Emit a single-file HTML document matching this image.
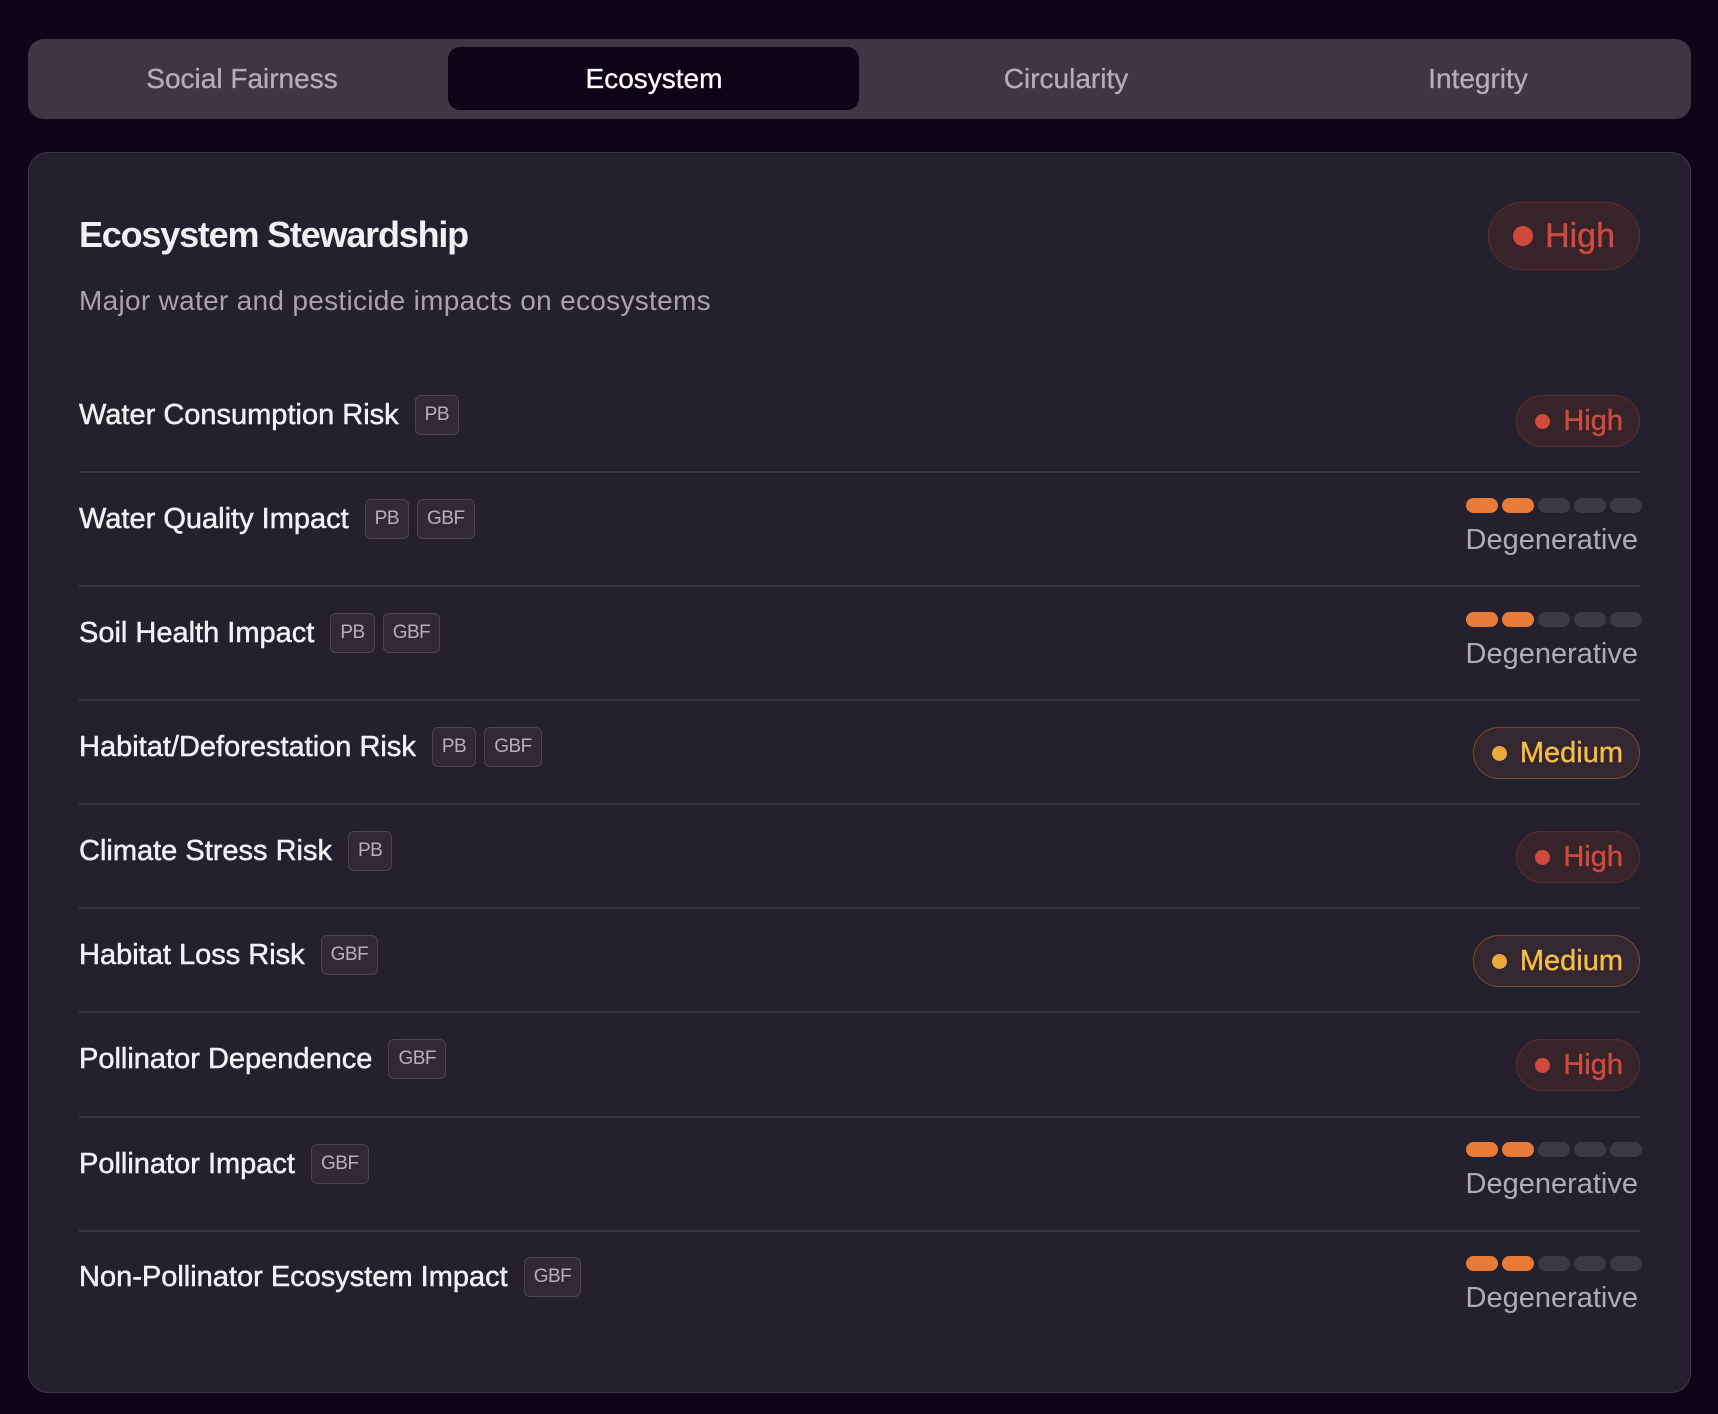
<!DOCTYPE html>
<html><head><meta charset="utf-8"><style>
*{margin:0;padding:0;box-sizing:border-box}
body{width:1718px;height:1414px;background:#0f0519;font-family:"Liberation Sans",sans-serif;position:relative;overflow:hidden}
.abs{position:absolute}
.tabs{left:28px;top:39px;width:1663px;height:80px;background:#3d3743;border-radius:16px}
.tab{top:39px;height:80px;line-height:80px;font-size:28px;color:#b3aeb8;text-align:center;width:400px;-webkit-text-stroke:0.3px currentColor}
.active{left:448px;top:47px;width:411px;height:63px;background:#0e0417;border-radius:12px}
.card{left:28px;top:152px;width:1663px;height:1241px;background:#25202d;border:1.5px solid #3c3744;border-radius:20px}
.title{left:79px;top:214px;font-size:36px;font-weight:bold;color:#f2f0f4;letter-spacing:-1.2px}
.sub{left:79px;top:285px;font-size:28px;color:#a8a3ad;letter-spacing:0.3px}
.sep{left:79px;width:1561px;height:2px;background:#3a3542}
.lab{left:79px;font-size:29px;color:#f3f1f5;line-height:32px;display:flex;align-items:center;white-space:nowrap;-webkit-text-stroke:0.5px #f3f1f5;margin-top:-3px}
.tag{display:inline-block;margin-left:16px;height:40px;line-height:38px;padding:0 9px;font-size:19px;color:#b5b0b9;background:#302a36;border:1.5px solid #4a4450;border-radius:6px;-webkit-text-stroke:0;letter-spacing:-0.5px}
.badge{right:78px;height:52px;border-radius:26px;display:flex;align-items:center;font-size:29px;padding:0 16px 0 18px;-webkit-text-stroke:0.4px currentColor}
.badge i{display:inline-block;width:15px;height:15px;border-radius:50%;margin-right:13px}
.hi{background:#37242b;border:1.5px solid #5e2b2e;color:#cf4a3d}
.hi i{background:#cf4a3d}
.md{background:#352730;border:1.5px solid #7d4a2a;color:#f4bd46}
.md i{background:#eaa83a}
.big{height:68px;border-radius:34px;font-size:34px;padding:0 24px 0 24px}
.big i{width:20px;height:20px;margin-right:12px}
.bar{left:1466px;display:flex;gap:4px}
.bar span{width:32px;height:15px;border-radius:8px;background:#3d3846}
.bar span.on{background:#e87b35}
.deg{right:80px;font-size:29px;color:#b0acb4;letter-spacing:0px}
</style></head><body>
<div class="abs tabs"></div>
<div class="abs active"></div>
<div class="abs tab" style="left:42px">Social Fairness</div>
<div class="abs tab" style="left:454px;color:#fff">Ecosystem</div>
<div class="abs tab" style="left:866px">Circularity</div>
<div class="abs tab" style="left:1278px">Integrity</div>

<div class="abs card"></div>
<div class="abs title">Ecosystem Stewardship</div>
<div class="abs sub">Major water and pesticide impacts on ecosystems</div>
<div class="abs badge hi big" style="top:202px"><i></i>High</div>

<div class="abs lab" style="top:398px">Water Consumption Risk<span class="tag">PB</span></div>
<div class="abs badge hi" style="top:395px"><i></i>High</div>
<div class="abs sep" style="top:471px"></div>

<div class="abs lab" style="top:502px">Water Quality Impact<span class="tag">PB</span><span class="tag" style="margin-left:8px">GBF</span></div>
<div class="abs bar" style="top:498px"><span class="on"></span><span class="on"></span><span></span><span></span><span></span></div>
<div class="abs deg" style="top:524px">Degenerative</div>
<div class="abs sep" style="top:585px"></div>

<div class="abs lab" style="top:616px">Soil Health Impact<span class="tag">PB</span><span class="tag" style="margin-left:8px">GBF</span></div>
<div class="abs bar" style="top:612px"><span class="on"></span><span class="on"></span><span></span><span></span><span></span></div>
<div class="abs deg" style="top:638px">Degenerative</div>
<div class="abs sep" style="top:699px"></div>

<div class="abs lab" style="top:730px">Habitat/Deforestation Risk<span class="tag">PB</span><span class="tag" style="margin-left:8px">GBF</span></div>
<div class="abs badge md" style="top:727px"><i></i>Medium</div>
<div class="abs sep" style="top:803px"></div>

<div class="abs lab" style="top:834px">Climate Stress Risk<span class="tag">PB</span></div>
<div class="abs badge hi" style="top:831px"><i></i>High</div>
<div class="abs sep" style="top:907px"></div>

<div class="abs lab" style="top:938px">Habitat Loss Risk<span class="tag">GBF</span></div>
<div class="abs badge md" style="top:935px"><i></i>Medium</div>
<div class="abs sep" style="top:1011px"></div>

<div class="abs lab" style="top:1042px">Pollinator Dependence<span class="tag">GBF</span></div>
<div class="abs badge hi" style="top:1039px"><i></i>High</div>
<div class="abs sep" style="top:1116px"></div>

<div class="abs lab" style="top:1147px">Pollinator Impact<span class="tag">GBF</span></div>
<div class="abs bar" style="top:1142px"><span class="on"></span><span class="on"></span><span></span><span></span><span></span></div>
<div class="abs deg" style="top:1168px">Degenerative</div>
<div class="abs sep" style="top:1230px"></div>

<div class="abs lab" style="top:1260px">Non-Pollinator Ecosystem Impact<span class="tag">GBF</span></div>
<div class="abs bar" style="top:1256px"><span class="on"></span><span class="on"></span><span></span><span></span><span></span></div>
<div class="abs deg" style="top:1282px">Degenerative</div>
</body></html>
